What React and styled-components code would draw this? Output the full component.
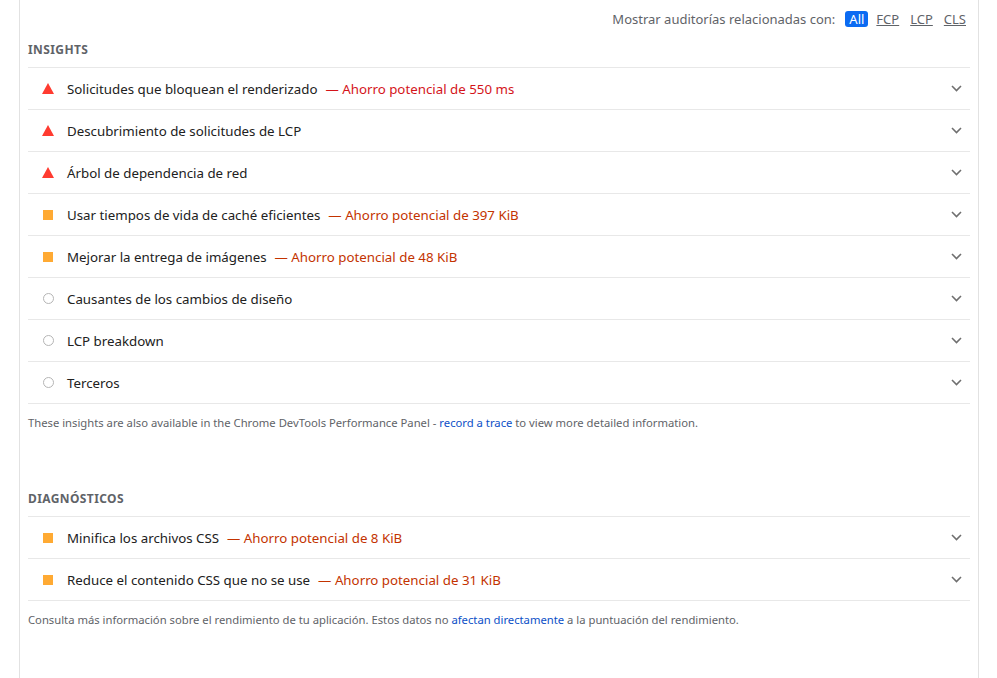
import React from 'react';
import styled, { createGlobalStyle } from 'styled-components';

const GlobalStyle = createGlobalStyle`
  body {
    margin: 0;
    background: #fff;
    font-family: "Noto Sans", "Open Sans", sans-serif;
    color: #212121;
  }
`;

const Page = styled.div`
  margin-left: 19px;
  width: 960px;
  min-height: 678px;
  border-left: 1px solid #e2e2e2;
  border-right: 1px solid #e2e2e2;
  padding: 0 8px;
  box-sizing: border-box;
`;

const FilterBar = styled.div`
  display: flex;
  justify-content: flex-end;
  align-items: center;
  gap: 11px;
  height: 38px;
  padding-right: 4px;
  font-size: 13px;
  color: #5f6368;
`;

const FilterLabel = styled.span`
  margin-right: -1px;
`;

const Chip = styled.span`
  padding: ${(p) => (p.active ? '0 4px' : '0')};
  margin-right: ${(p) => (p.active ? '-3px' : '0')};
  border-radius: 3px;
  line-height: 16px;
  background: ${(p) => (p.active ? '#0b6bf2' : 'transparent')};
  color: ${(p) => (p.active ? '#fff' : '#5f6368')};
  text-decoration: ${(p) => (p.active ? 'none' : 'underline')};
`;

const Heading = styled.div`
  font-size: 12px;
  font-weight: 700;
  letter-spacing: 0.4px;
  color: #5f6368;
  height: 29px;
  line-height: 24px;
`;

const List = styled.div`
  border-top: 1px solid #e8e8e8;
`;

const Row = styled.div`
  display: flex;
  align-items: center;
  height: 41px;
  border-bottom: 1px solid #e8e8e8;
  padding: 0 8px 0 14px;
  font-size: 13.3px;
`;

const IconBox = styled.span`
  width: 12px;
  display: flex;
  justify-content: center;
  margin-right: 13px;
`;

const Square = styled.span`
  width: 10px;
  height: 10px;
  background: #ffaa33;
`;

const Circle = styled.span`
  width: 9px;
  height: 9px;
  border: 1.5px solid #b5b5b5;
  border-radius: 50%;
`;

const Title = styled.span`
  flex: 1;
`;

const Savings = styled.span`
  margin-left: 8px;
  color: ${(p) => (p.fail ? '#d4141a' : '#c33300')};
`;

const Note = styled.p`
  margin: 0;
  padding: 11px 0 0;
  font-size: 11.25px;
  color: #5f6368;
  height: ${(p) => p.h}px;
  box-sizing: border-box;
`;

const Link = styled.a`
  color: #0c50c7;
  text-decoration: none;
`;

const Triangle = () => (
  <svg width="12" height="11" viewBox="0 0 12 11">
    <polygon points="6,0 12,11 0,11" fill="#ff3b30" />
  </svg>
);

const Chevron = () => (
  <svg width="11" height="7" viewBox="0 0 11 7">
    <path d="M1 1l4.5 4.5L10 1" fill="none" stroke="#6f6f6f" strokeWidth="1.6" />
  </svg>
);

const icons = {
  fail: <Triangle />,
  average: <Square />,
  info: <Circle />,
};

const insights = [
  { type: 'fail', title: 'Solicitudes que bloquean el renderizado', saving: 'Ahorro potencial de 550 ms' },
  { type: 'fail', title: 'Descubrimiento de solicitudes de LCP' },
  { type: 'fail', title: 'Árbol de dependencia de red' },
  { type: 'average', title: 'Usar tiempos de vida de caché eficientes', saving: 'Ahorro potencial de 397 KiB' },
  { type: 'average', title: 'Mejorar la entrega de imágenes', saving: 'Ahorro potencial de 48 KiB' },
  { type: 'info', title: 'Causantes de los cambios de diseño' },
  { type: 'info', title: 'LCP breakdown' },
  { type: 'info', title: 'Terceros' },
];

const diagnostics = [
  { type: 'average', title: 'Minifica los archivos CSS', saving: 'Ahorro potencial de 8 KiB' },
  { type: 'average', title: 'Reduce el contenido CSS que no se use', saving: 'Ahorro potencial de 31 KiB' },
];

const AuditList = ({ items }) => (
  <List>
    {items.map((item) => (
      <Row key={item.title}>
        <IconBox>{icons[item.type]}</IconBox>
        <Title>
          {item.title}
          {item.saving && (
            <Savings fail={item.type === 'fail'}>— {item.saving}</Savings>
          )}
        </Title>
        <Chevron />
      </Row>
    ))}
  </List>
);

export default function App() {
  return (
    <>
      <GlobalStyle />
      <Page>
        <FilterBar>
          <FilterLabel>Mostrar auditorías relacionadas con:</FilterLabel>
          <Chip active>All</Chip>
          <Chip>FCP</Chip>
          <Chip>LCP</Chip>
          <Chip>CLS</Chip>
        </FilterBar>
        <Heading>INSIGHTS</Heading>
        <AuditList items={insights} />
        <Note h={83}>
          These insights are also available in the Chrome DevTools Performance Panel -{' '}
          <Link>record a trace</Link> to view more detailed information.
        </Note>
        <Heading>DIAGNÓSTICOS</Heading>
        <AuditList items={diagnostics} />
        <Note h={40}>
          Consulta más información sobre el rendimiento de tu aplicación. Estos datos no{' '}
          <Link>afectan directamente</Link> a la puntuación del rendimiento.
        </Note>
      </Page>
    </>
  );
}
